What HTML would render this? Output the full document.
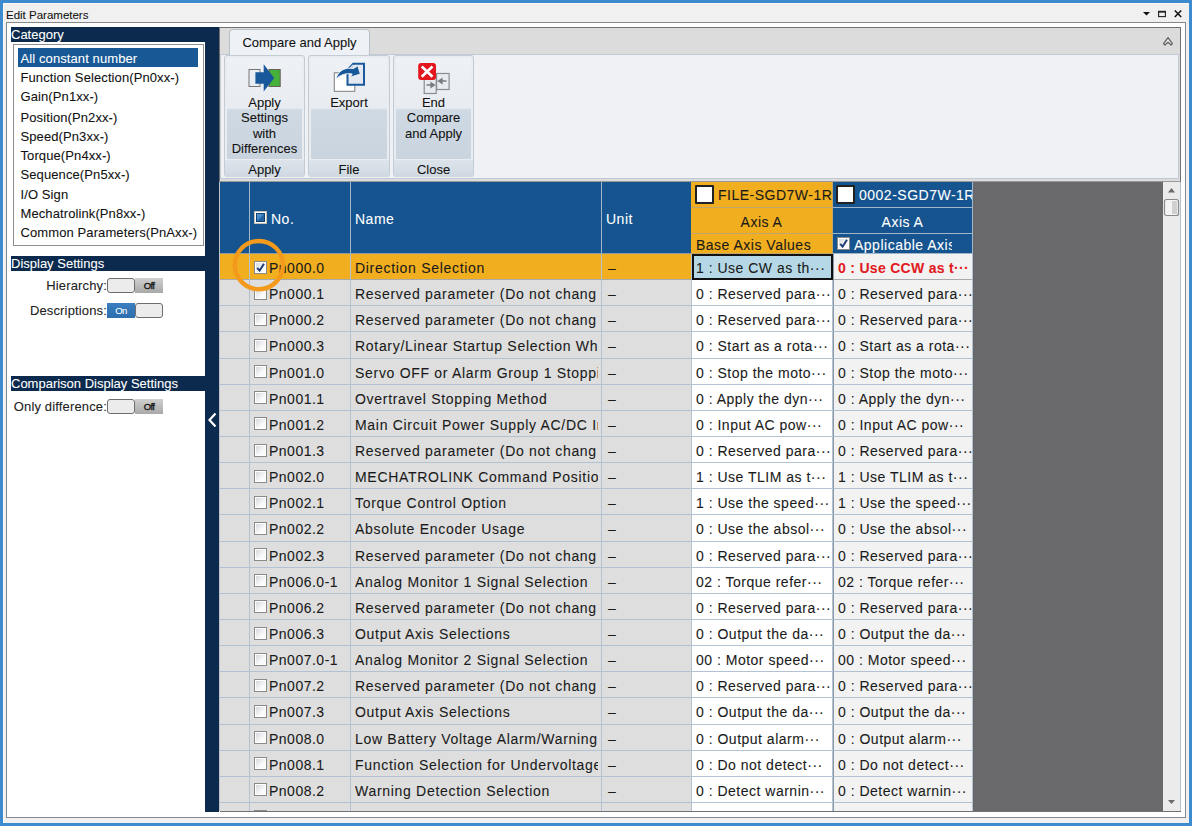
<!DOCTYPE html>
<html><head><meta charset="utf-8">
<style>
*{box-sizing:border-box;margin:0;padding:0}
html,body{width:1192px;height:826px;overflow:hidden}
body{position:relative;background:#3e8acf;font-family:"Liberation Sans",sans-serif;color:#1a1a1a;-webkit-text-stroke:0.08px currentColor}
.a{position:absolute}
#win{left:3px;top:3px;width:1186px;height:820px;background:#f0f0f0;border-top:1px solid #fbf8f2;border-left:1px solid #fbf8f2}
#title{left:6px;top:9px;font-size:11.5px;color:#111;white-space:nowrap}
#outer{left:6px;top:22px;width:1180px;height:796px;border:1px solid #85888c;background:#fff}
.hdr{background:#0c2a4d;color:#fff;font-size:13px;line-height:15px;height:15px;white-space:nowrap}
#navy{left:205px;top:27px;width:14px;height:785px;background:#0c2a4d}
#lb{left:13px;top:44px;width:191px;height:202px;border:1px solid #8d8f93;background:#fff}
.li{position:absolute;left:4px;width:180px;height:19px;font-size:13px;line-height:19px;padding-left:2.5px;padding-top:1px;letter-spacing:0.1px;white-space:nowrap;color:#111}
.li.sel{background:#175895;color:#fff}
.lbl{font-size:13px;white-space:nowrap;color:#222;text-align:right;letter-spacing:0.15px}
.tog{width:56px;height:15px}
.tog .knob{position:absolute;top:0;width:28px;height:15px;background:#ececec;border:1.5px solid #6e6e6e;border-radius:3px}
.tog .off{position:absolute;top:0;left:28px;width:28px;height:15px;background:linear-gradient(#d0d0d0,#a9a9a9);font-size:9.5px;line-height:15px;text-align:center;color:#111;letter-spacing:-0.6px;-webkit-text-stroke:0.3px #111}
.tog .on{position:absolute;top:0;left:0;width:28px;height:15px;background:#3478b8;font-size:9.5px;line-height:15px;text-align:center;color:#fff;letter-spacing:-0.6px;background:linear-gradient(#3a7fc0,#2d6eae)}
#rib{left:219px;top:27px;width:962px;height:155px;border:1px solid #707070;border-bottom:1px solid #9a9a9a;background:#dcdcdc}
#tab{left:229px;top:29px;width:141px;height:26px;background:#eef1f5;border:1px solid #b9c0ca;border-bottom:none;border-radius:4px 4px 0 0;font-size:13px;line-height:26px;text-align:center;color:#111}
#ribc{left:220px;top:54px;width:959px;height:125px;background:#eff1f4;border:1px solid #c0cad6}
.grp{top:55px;height:122px;border:1px solid #c3cbd4;border-radius:3px;background:#e9edf1}
.grp .btn{position:absolute;left:2px;top:2px;right:2px;height:101px;background:linear-gradient(#eef1f5 0px,#e8ecf0 50px,#cfd9e3 52px,#cad4de 101px)}
.grp .gl{position:absolute;left:0;right:0;top:104px;height:17px;font-size:13px;line-height:19px;text-align:center;color:#111;background:linear-gradient(#dde4eb,#cfd8e1)}
.grp .bt{position:absolute;left:0;right:0;top:39px;font-size:13px;line-height:15.3px;text-align:center;color:#111}
.grp svg{position:absolute}
#tbl{left:220px;top:182px;width:753px;height:629px;background:#dedede;overflow:hidden}
#gray{left:973px;top:182px;width:190px;height:630px;background:#69696b}
#sb{left:1163px;top:182px;width:18px;height:630px;background:#ebebeb;border-right:1px solid #b4c0cc}
.th{position:absolute;background:#15548f;color:#fff;font-size:14px;letter-spacing:0.5px;white-space:nowrap;overflow:hidden;border-right:1px solid #a3b5c9}
.tr{position:absolute;left:0;width:753px;height:26.14px}
.tr>div{position:absolute;top:0;height:100%;font-size:14px;letter-spacing:0.5px;white-space:nowrap;overflow:hidden;line-height:29px;border-bottom:1px solid #b3c2d3;border-right:1px solid #b3c2d3;color:#1a1a1a}
.c0{left:0;width:30px}
.c1{left:30px;width:101px}
.c1 span{position:absolute;left:19px;top:0}
.c2{left:131px;width:251px;padding-left:4px;letter-spacing:0.7px !important}
.c3{left:382px;width:90px;padding-left:6px}
.c4{left:472px;width:141px;padding-left:4px;background:#fff}
.c5{left:613px;width:140px;padding-left:4px;background:#f2f2f2;border-left:1px solid #8d99a6}
.c4.selc{background:#b6d8e6;border:2px solid #111 !important;padding-left:2px;line-height:25px}
.c5.red{color:#e11b22 !important;font-weight:bold;letter-spacing:0.3px;background:#f2f2f2}
.cb{position:absolute;left:4px;top:6.6px;width:13px;height:13px;border:1px solid #8a8a8a;background:linear-gradient(135deg,#cfd4d9,#fbfbfb 65%);box-shadow:inset 0 0 0 1px #fff}
.cb svg{position:absolute;left:0;top:0}
.th.or{background:#f1ae1f;color:#1a1a1a;border-right:1px solid #c7a766}
.th.or, .th{border-bottom:1px solid #a3b5c9}
.th.or{border-bottom-color:#c2a66f}
.hcb{position:absolute;width:19px;height:19px;background:#fff;border:2px solid #222;border-radius:1px}
.c2 b,.c4 b,.c5 b{font-weight:inherit}
.c2 i{font-style:normal;display:block;width:243px;overflow:hidden}
#tblb{left:220px;top:811px;width:961px;height:1px;background:#6f7275}
#circ{left:230px;top:236px}
.r0>div{border-bottom-color:#a9aaac !important}

.th.hb{border-bottom-color:#8e9ba6}
.hcb2{position:absolute;left:4px;top:29px;width:13px;height:13px;border:1px solid #c8bfb5;background:#fff;padding:2px}
.hcb2 i{display:block;width:7px;height:7px;background:linear-gradient(135deg,#5aa0dc 0%,#3b82c4 50%,#1f5f9c 51%,#2a6aa6 100%);outline:1px solid #0f3d6e}
</style></head>
<body>
<div id="win" class="a"></div>
<div id="title" class="a">Edit Parameters</div>
<div id="outer" class="a"></div>

<div class="a hdr" style="left:11px;top:27px;width:194px">Category</div>
<div id="lb" class="a">
  <div class="li sel" style="top:3px">All constant number</div>
  <div class="li" style="top:22px">Function Selection(Pn0xx-)</div>
  <div class="li" style="top:41px">Gain(Pn1xx-)</div>
  <div class="li" style="top:62px">Position(Pn2xx-)</div>
  <div class="li" style="top:81px">Speed(Pn3xx-)</div>
  <div class="li" style="top:100px">Torque(Pn4xx-)</div>
  <div class="li" style="top:119px">Sequence(Pn5xx-)</div>
  <div class="li" style="top:139px">I/O Sign</div>
  <div class="li" style="top:158px">Mechatrolink(Pn8xx-)</div>
  <div class="li" style="top:177px">Common Parameters(PnAxx-)</div>
</div>
<div class="a hdr" style="left:11px;top:256px;width:194px">Display Settings</div>
<div class="a lbl" style="left:20px;top:278px;width:87px">Hierarchy:</div>
<div class="a tog" style="left:107px;top:278px"><div class="knob" style="left:0"></div><div class="off">Off</div></div>
<div class="a lbl" style="left:20px;top:303px;width:87px">Descriptions:</div>
<div class="a tog" style="left:107px;top:303px"><div class="on">On</div><div class="knob" style="left:28px"></div></div>
<div class="a hdr" style="left:11px;top:376px;width:194px">Comparison Display Settings</div>
<div class="a lbl" style="left:5px;top:399px;width:102px">Only difference:</div>
<div class="a tog" style="left:107px;top:399px"><div class="knob" style="left:0"></div><div class="off">Off</div></div>

<div id="navy" class="a"></div>

<div id="rib" class="a"></div>
<div id="ribc" class="a"></div>
<div id="tab" class="a">Compare and Apply</div>
<div class="a grp" style="left:224px;width:81px"><div class="btn"></div><svg style="left:19px;top:4px" width="40" height="35" viewBox="244 60 40 35"><rect x="249" y="69.5" width="11" height="17" fill="#e8ecf4" stroke="#7a7570" stroke-width="1"/><rect x="269" y="69.5" width="11.2" height="17" fill="#45b03a" stroke="#6a5e56" stroke-width="1"/><path d="M255.4 72.2 H263.7 V64.3 L274.2 78 L263.7 91.6 V83.7 H255.4 Z" fill="#18579a"/></svg><div class="bt">Apply<br>Settings<br>with<br>Differences</div><div class="gl">Apply</div></div>
<div class="a grp" style="left:308px;width:82px"><div class="btn"></div><svg style="left:19px;top:3px" width="40" height="40" viewBox="328 59 40 40"><rect x="334.3" y="72.8" width="20.5" height="18.5" fill="#fff" stroke="#7d7d7d" stroke-width="1"/><path d="M353.2 63.8 H364 V84.8 H347.5 V69.8 Z" fill="#e4e9f1" stroke="#1a5a9c" stroke-width="2" stroke-linejoin="miter"/><path d="M347.8 69.6 L353 64.2 L353 69.6 Z" fill="#c9d6e6"/><path d="M335.8 79.2 C338 71.5 343.5 68 350 68.2 L353.4 68.6 L357.8 65.8 L360.4 74 L350.2 77.2 L352.2 74 C347 73 340.8 74.2 335.8 79.2 Z" fill="#18579a" stroke="#f4f6f9" stroke-width="0.9" stroke-linejoin="round"/></svg><div class="bt">Export</div><div class="gl">File</div></div>
<div class="a grp" style="left:393px;width:81px"><div class="btn"></div><svg style="left:19px;top:4px" width="40" height="40" viewBox="413 60 40 40"><rect x="424.2" y="77" width="12" height="16.5" fill="#e8ecf2" stroke="#8a8c90" stroke-width="1.2"/><rect x="436.6" y="73.5" width="12.5" height="16" fill="#e8ecf2" stroke="#8a8c90" stroke-width="1.2"/><path d="M426.5 85 H433 M431 82.8 L434.5 85 L431 87.2 Z" stroke="#7a7c80" stroke-width="1.3" fill="#7a7c80"/><path d="M446.5 81 H440 M442 78.8 L438.5 81 L442 83.2 Z" stroke="#7a7c80" stroke-width="1.3" fill="#7a7c80"/><rect x="418.2" y="63" width="17.8" height="17" rx="3" fill="#e3161e"/><path d="M421.7 66.5 L432.5 76.8 M432.5 66.5 L421.7 76.8" stroke="#fff" stroke-width="2.6"/></svg><div class="bt">End<br>Compare<br>and Apply</div><div class="gl">Close</div></div>

<div id="tbl" class="a">
<div class="tr r0" style="top:72.00px;background:#f1ae1f">
<div class="c0"></div><div class="c1"><div class="cb on"><svg width="11" height="11" viewBox="0 0 11 11"><path d="M2.2 5.8 L4.6 8.6 L9 1.8" fill="none" stroke="#1c3d73" stroke-width="1.9"/></svg></div><span>Pn000.0</span></div><div class="c2"><i>Direction Selection</i></div><div class="c3">&ndash;</div>
<div class="c4 selc">1 : Use CW as th&middot;&middot;&middot;</div><div class="c5 red">0 : Use CCW as t&middot;&middot;&middot;</div>
</div>
<div class="tr" style="top:98.14px;background:#dedede">
<div class="c0"></div><div class="c1"><div class="cb"></div><span>Pn000.1</span></div><div class="c2"><i>Reserved parameter (Do not chang</i></div><div class="c3">&ndash;</div>
<div class="c4">0 : Reserved para&middot;&middot;&middot;</div><div class="c5">0 : Reserved para&middot;&middot;&middot;</div>
</div>
<div class="tr" style="top:124.28px;background:#dedede">
<div class="c0"></div><div class="c1"><div class="cb"></div><span>Pn000.2</span></div><div class="c2"><i>Reserved parameter (Do not chang</i></div><div class="c3">&ndash;</div>
<div class="c4">0 : Reserved para&middot;&middot;&middot;</div><div class="c5">0 : Reserved para&middot;&middot;&middot;</div>
</div>
<div class="tr" style="top:150.42px;background:#dedede">
<div class="c0"></div><div class="c1"><div class="cb"></div><span>Pn000.3</span></div><div class="c2"><i>Rotary/Linear Startup Selection When</i></div><div class="c3">&ndash;</div>
<div class="c4">0 : Start as a rota&middot;&middot;&middot;</div><div class="c5">0 : Start as a rota&middot;&middot;&middot;</div>
</div>
<div class="tr" style="top:176.56px;background:#dedede">
<div class="c0"></div><div class="c1"><div class="cb"></div><span>Pn001.0</span></div><div class="c2"><i>Servo OFF or Alarm Group 1 Stopping</i></div><div class="c3">&ndash;</div>
<div class="c4">0 : Stop the moto&middot;&middot;&middot;</div><div class="c5">0 : Stop the moto&middot;&middot;&middot;</div>
</div>
<div class="tr" style="top:202.70px;background:#dedede">
<div class="c0"></div><div class="c1"><div class="cb"></div><span>Pn001.1</span></div><div class="c2"><i>Overtravel Stopping Method</i></div><div class="c3">&ndash;</div>
<div class="c4">0 : Apply the dyn&middot;&middot;&middot;</div><div class="c5">0 : Apply the dyn&middot;&middot;&middot;</div>
</div>
<div class="tr" style="top:228.84px;background:#dedede">
<div class="c0"></div><div class="c1"><div class="cb"></div><span>Pn001.2</span></div><div class="c2"><i>Main Circuit Power Supply AC/DC Input</i></div><div class="c3">&ndash;</div>
<div class="c4">0 : Input AC pow&middot;&middot;&middot;</div><div class="c5">0 : Input AC pow&middot;&middot;&middot;</div>
</div>
<div class="tr" style="top:254.98px;background:#dedede">
<div class="c0"></div><div class="c1"><div class="cb"></div><span>Pn001.3</span></div><div class="c2"><i>Reserved parameter (Do not chang</i></div><div class="c3">&ndash;</div>
<div class="c4">0 : Reserved para&middot;&middot;&middot;</div><div class="c5">0 : Reserved para&middot;&middot;&middot;</div>
</div>
<div class="tr" style="top:281.12px;background:#dedede">
<div class="c0"></div><div class="c1"><div class="cb"></div><span>Pn002.0</span></div><div class="c2"><i>MECHATROLINK Command Position</i></div><div class="c3">&ndash;</div>
<div class="c4">1 : Use TLIM as t&middot;&middot;&middot;</div><div class="c5">1 : Use TLIM as t&middot;&middot;&middot;</div>
</div>
<div class="tr" style="top:307.26px;background:#dedede">
<div class="c0"></div><div class="c1"><div class="cb"></div><span>Pn002.1</span></div><div class="c2"><i>Torque Control Option</i></div><div class="c3">&ndash;</div>
<div class="c4">1 : Use the speed&middot;&middot;&middot;</div><div class="c5">1 : Use the speed&middot;&middot;&middot;</div>
</div>
<div class="tr" style="top:333.40px;background:#dedede">
<div class="c0"></div><div class="c1"><div class="cb"></div><span>Pn002.2</span></div><div class="c2"><i>Absolute Encoder Usage</i></div><div class="c3">&ndash;</div>
<div class="c4">0 : Use the absol&middot;&middot;&middot;</div><div class="c5">0 : Use the absol&middot;&middot;&middot;</div>
</div>
<div class="tr" style="top:359.54px;background:#dedede">
<div class="c0"></div><div class="c1"><div class="cb"></div><span>Pn002.3</span></div><div class="c2"><i>Reserved parameter (Do not chang</i></div><div class="c3">&ndash;</div>
<div class="c4">0 : Reserved para&middot;&middot;&middot;</div><div class="c5">0 : Reserved para&middot;&middot;&middot;</div>
</div>
<div class="tr" style="top:385.68px;background:#dedede">
<div class="c0"></div><div class="c1"><div class="cb"></div><span>Pn006.0-1</span></div><div class="c2"><i>Analog Monitor 1 Signal Selection</i></div><div class="c3">&ndash;</div>
<div class="c4">02 : Torque refer&middot;&middot;&middot;</div><div class="c5">02 : Torque refer&middot;&middot;&middot;</div>
</div>
<div class="tr" style="top:411.82px;background:#dedede">
<div class="c0"></div><div class="c1"><div class="cb"></div><span>Pn006.2</span></div><div class="c2"><i>Reserved parameter (Do not chang</i></div><div class="c3">&ndash;</div>
<div class="c4">0 : Reserved para&middot;&middot;&middot;</div><div class="c5">0 : Reserved para&middot;&middot;&middot;</div>
</div>
<div class="tr" style="top:437.96px;background:#dedede">
<div class="c0"></div><div class="c1"><div class="cb"></div><span>Pn006.3</span></div><div class="c2"><i>Output Axis Selections</i></div><div class="c3">&ndash;</div>
<div class="c4">0 : Output the da&middot;&middot;&middot;</div><div class="c5">0 : Output the da&middot;&middot;&middot;</div>
</div>
<div class="tr" style="top:464.10px;background:#dedede">
<div class="c0"></div><div class="c1"><div class="cb"></div><span>Pn007.0-1</span></div><div class="c2"><i>Analog Monitor 2 Signal Selection</i></div><div class="c3">&ndash;</div>
<div class="c4">00 : Motor speed&middot;&middot;&middot;</div><div class="c5">00 : Motor speed&middot;&middot;&middot;</div>
</div>
<div class="tr" style="top:490.24px;background:#dedede">
<div class="c0"></div><div class="c1"><div class="cb"></div><span>Pn007.2</span></div><div class="c2"><i>Reserved parameter (Do not chang</i></div><div class="c3">&ndash;</div>
<div class="c4">0 : Reserved para&middot;&middot;&middot;</div><div class="c5">0 : Reserved para&middot;&middot;&middot;</div>
</div>
<div class="tr" style="top:516.38px;background:#dedede">
<div class="c0"></div><div class="c1"><div class="cb"></div><span>Pn007.3</span></div><div class="c2"><i>Output Axis Selections</i></div><div class="c3">&ndash;</div>
<div class="c4">0 : Output the da&middot;&middot;&middot;</div><div class="c5">0 : Output the da&middot;&middot;&middot;</div>
</div>
<div class="tr" style="top:542.52px;background:#dedede">
<div class="c0"></div><div class="c1"><div class="cb"></div><span>Pn008.0</span></div><div class="c2"><i>Low Battery Voltage Alarm/Warning</i></div><div class="c3">&ndash;</div>
<div class="c4">0 : Output alarm&middot;&middot;&middot;</div><div class="c5">0 : Output alarm&middot;&middot;&middot;</div>
</div>
<div class="tr" style="top:568.66px;background:#dedede">
<div class="c0"></div><div class="c1"><div class="cb"></div><span>Pn008.1</span></div><div class="c2"><i>Function Selection for Undervoltage</i></div><div class="c3">&ndash;</div>
<div class="c4">0 : Do not detect&middot;&middot;&middot;</div><div class="c5">0 : Do not detect&middot;&middot;&middot;</div>
</div>
<div class="tr" style="top:594.80px;background:#dedede">
<div class="c0"></div><div class="c1"><div class="cb"></div><span>Pn008.2</span></div><div class="c2"><i>Warning Detection Selection</i></div><div class="c3">&ndash;</div>
<div class="c4">0 : Detect warnin&middot;&middot;&middot;</div><div class="c5">0 : Detect warnin&middot;&middot;&middot;</div>
</div>
<div class="tr" style="top:620.94px;background:#dedede">
<div class="c0"></div><div class="c1"><div class="cb"></div><span>Pn008.3</span></div><div class="c2"><i>Reserved parameter (Do not chang</i></div><div class="c3">&ndash;</div>
<div class="c4">0 : Reserved para&middot;&middot;&middot;</div><div class="c5">0 : Reserved para&middot;&middot;&middot;</div>
</div>
<div class="th hb" style="left:0;top:0;width:30px;height:72px"></div>
<div class="th hb" style="left:30px;top:0;width:101px;height:72px"><div class="hcb2"><i></i></div><span style="position:absolute;left:21px;top:29px">No.</span></div>
<div class="th hb" style="left:131px;top:0;width:251px;height:72px"><span style="position:absolute;left:4px;top:29px">Name</span></div>
<div class="th hb" style="left:382px;top:0;width:90px;height:72px"><span style="position:absolute;left:4px;top:29px">Unit</span></div>
<div class="th or" style="left:471px;top:0;width:142px;height:26px"><div class="hcb" style="left:4px;top:3px"></div><span style="position:absolute;left:27px;top:5px">FILE-SGD7W-1R</span></div>
<div class="th or" style="left:471px;top:26px;width:142px;height:26px;text-align:center;line-height:29px">Axis A</div>
<div class="th or" style="left:471px;top:52px;width:142px;height:20px"><span style="position:absolute;left:5px;top:3px">Base Axis Values</span></div>
<div class="th" style="left:613px;top:0;width:140px;height:26px"><div class="hcb" style="left:3px;top:3px"></div><span style="position:absolute;left:26px;top:5px">0002-SGD7W-1R</span></div>
<div class="th" style="left:613px;top:26px;width:140px;height:26px;text-align:center;line-height:29px">Axis A</div>
<div class="th" style="left:613px;top:52px;width:140px;height:20px"><div class="cb on" style="left:4px;top:3px"><svg width="11" height="11" viewBox="0 0 11 11"><path d="M2.2 5.8 L4.6 8.6 L9 1.8" fill="none" stroke="#1c3d73" stroke-width="1.9"/></svg></div><span style="position:absolute;left:21px;top:3px;width:98px;overflow:hidden">Applicable Axis</span></div>
</div>
<div id="gray" class="a"></div>
<div id="sb" class="a">
<svg class="a" style="left:0;top:0" width="18" height="629" viewBox="0 0 18 629">
<path d="M5 10.5 L12 10.5 L8.5 6 Z" fill="#6a6a6a"/>
<rect x="1.5" y="17.5" width="14" height="16" rx="2" fill="#f4f4f4" stroke="#8a8a8a" stroke-width="1.2"/>
<rect x="9" y="19" width="5" height="13" fill="#cfd0d2"/>
<path d="M5 618 L12 618 L8.5 622 Z" fill="#6a6a6a"/>
</svg></div>
<div id="tblb" class="a"></div><div class="a" style="left:219px;top:182px;width:1px;height:629px;background:#bfc3c8"></div>
<svg id="circ" class="a" width="58" height="58" viewBox="0 0 58 58"><circle cx="28.9" cy="29.1" r="24.1" fill="none" stroke="#f39a1c" stroke-width="4.4"/></svg>
<svg class="a" style="left:1140px;top:8px" width="45" height="12" viewBox="0 0 45 12">
<path d="M3 4 L10 4 L6.5 7.5 Z" fill="#111"/>
<rect x="18.6" y="3.6" width="6.8" height="5" fill="none" stroke="#222" stroke-width="1.1"/><rect x="18" y="2.8" width="8" height="1.8" fill="#222"/>
<path d="M34.8 2.5 L41.2 9 M41.2 2.5 L34.8 9" stroke="#111" stroke-width="1.5"/>
</svg>
<svg class="a" style="left:1160px;top:34px" width="16" height="14" viewBox="0 0 16 14">
<path d="M3.6 9.6 L8 3.6 L12.4 9.6 L11 11 L8 8.3 L5 11 Z" fill="#efeae0" stroke="#5f6265" stroke-width="1.3" stroke-linejoin="round"/>
</svg>
<svg class="a" style="left:206px;top:411px" width="12" height="18" viewBox="0 0 12 18"><path d="M9.5 2.5 L3.5 9 L9.5 15.5" fill="none" stroke="#fff" stroke-width="2.2"/></svg>
</body></html>
